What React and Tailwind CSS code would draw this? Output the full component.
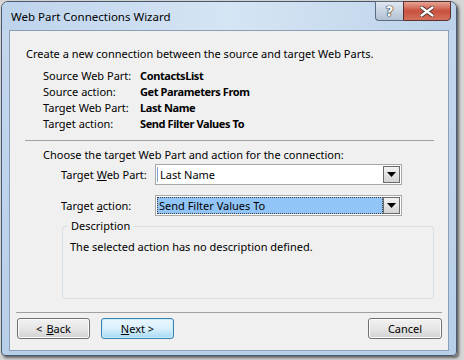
const font = { fontFamily: '"Noto Sans", "Open Sans", sans-serif' };

function DropButton() {
  return (
    <div className="w-[17px] h-[17px] border border-[#6a6a6a] bg-gradient-to-b from-[#f2f2f2] to-[#d4d4d4] flex items-center justify-center">
      <svg width="9" height="5" viewBox="0 0 9 5">
        <path d="M0 0 H9 L4.5 5 Z" fill="#000" />
      </svg>
    </div>
  );
}

function Button({ children, primary, w = "w-[73px]" }) {
  return (
    <div
      className={
        "h-[21px] rounded-[3px] border flex items-center justify-center text-[11px] text-black " +
        w +
        (primary
          ? " border-[#3c7fb1] bg-gradient-to-b from-[#eaf6fd] via-[#d9f0fc] to-[#a7d9f5] shadow-[inset_0_0_0_1px_#c6ebf9]"
          : " border-[#707070] bg-gradient-to-b from-[#f2f2f2] via-[#e6e6e6] to-[#d2d2d2] shadow-[inset_0_0_0_1px_#fcfcfc]")
      }
    >
      {children}
    </div>
  );
}

export default function App() {
  return (
    <div className="w-[464px] h-[360px] bg-[#d6d6d6] overflow-hidden" style={font}>
      <div className="ml-[1px] mt-[1px] w-[456px] h-[355px] rounded-t-[7px] rounded-b-[4px] border border-[#48596d] bg-gradient-to-b from-[#c3d7ee] via-[#bed4ec] to-[#b8cfe9] shadow-[2px_2px_3px_rgba(0,0,0,0.55)] flex flex-col">
        <div className="h-[28px] flex items-start justify-between rounded-t-[6px] bg-gradient-to-r from-[#bdd3ec] via-[#d6e5f4] to-[#bcd2ea]">
          <div className="pl-[9px] pt-[7px] text-[11.5px] leading-[16px] text-black">
            Web Part Connections Wizard
          </div>
          <div className="flex mr-[5px] -mt-[1px]">
            <div className="w-[28px] h-[20px] border border-[#5b6a7c] border-r-0 rounded-bl-[4px] bg-gradient-to-b from-[#dfe7f0] via-[#c8d4e2] to-[#b3c2d4] flex items-center justify-center">
              <span className="text-[14px] font-bold leading-none text-white [text-shadow:0_0_1px_#222,0_0_1px_#222,0_0_1px_#222]" style={{ fontFamily: '"DejaVu Sans", sans-serif' }}>?</span>
            </div>
            <div className="w-[48px] h-[20px] border border-[#5b3030] rounded-br-[4px] bg-gradient-to-b from-[#e5a496] via-[#c9503e] to-[#d4705c] flex items-center justify-center">
              <svg width="14" height="11" viewBox="0 0 14 11">
                <path d="M1.5 1.5 L12.5 9.5 M12.5 1.5 L1.5 9.5" stroke="#3a2020" strokeWidth="4" strokeLinecap="round" />
                <path d="M1.5 1.5 L12.5 9.5 M12.5 1.5 L1.5 9.5" stroke="#fff" strokeWidth="2.4" strokeLinecap="round" />
              </svg>
            </div>
          </div>
        </div>
        <div className="mx-[7px] h-[321px] border border-[#8d9fb5] bg-[#f0f0f0] flex flex-col text-[11px] leading-[16px] text-black">
          <div className="ml-[16px] mt-[15px]">
            Create a new connection between the source and target Web Parts.
          </div>
          <div className="ml-[33px] mt-[6px] grid grid-cols-[97px_auto]">
            <div>Source Web Part:</div>
            <div className="font-bold tracking-[-0.4px]">ContactsList</div>
            <div>Source action:</div>
            <div className="font-bold tracking-[-0.4px]">Get Parameters From</div>
            <div>Target Web Part:</div>
            <div className="font-bold tracking-[-0.4px]">Last Name</div>
            <div>Target action:</div>
            <div className="font-bold tracking-[-0.4px]">Send Filter Values To</div>
          </div>
          <div className="ml-[15px] mr-[14px] mt-[8px] h-[1px] bg-[#a0a0a0]" />
          <div className="ml-[33px] mt-[6px]">
            Choose the target Web Part and action for the connection:
          </div>
          <div className="ml-[51px] mt-[1px] flex items-center">
            <div className="w-[94px] pt-[1px]">
              Target <span className="underline">W</span>eb Part:
            </div>
            <div className="w-[247px] h-[21px] border border-[#a8a8a8] bg-white flex items-center justify-between pl-[1px] pr-[1px]">
              <div className="flex items-center h-[17px]">
                <div className="w-[1px] h-[15px] bg-[#7ea7d8]" />
                <span className="ml-[2px]">Last Name</span>
              </div>
              <DropButton />
            </div>
          </div>
          <div className="ml-[51px] mt-[10px] flex items-center">
            <div className="w-[94px] pt-[1px]">
              Target <span className="underline">a</span>ction:
            </div>
            <div className="w-[247px] h-[21px] border border-[#a8a8a8] bg-white flex items-center justify-between pl-[1px] pr-[1px]">
              <div className="w-[227px] h-[17px] bg-[#91c4f7] border border-dotted border-[#3a3a3a] flex items-center pl-[1px]">
                Send Filter Values To
              </div>
              <DropButton />
            </div>
          </div>
          <div className="ml-[52px] mr-[14px] mt-[10px] h-[73px] border border-[#d5dfe5] rounded-[3px] relative">
            <div className="absolute -top-[9px] left-[4px] px-[4px] bg-[#f0f0f0]">Description</div>
            <div className="ml-[7px] mt-[12px]">The selected action has no description defined.</div>
          </div>
          <div className="ml-[6px] mr-[6px] mt-[13px] h-[1px] bg-[#a0a0a0]" />
          <div className="ml-[7px] mr-[6px] mt-[5px] flex items-center">
            <Button>
              &lt; <span className="underline ml-[4px]">B</span>ack
            </Button>
            <div className="ml-[11px]">
              <Button primary>
                <span className="underline">N</span>ext &gt;
              </Button>
            </div>
            <div className="flex-1" />
            <Button w="w-[74px]">Cancel</Button>
          </div>
        </div>
      </div>
    </div>
  );
}
